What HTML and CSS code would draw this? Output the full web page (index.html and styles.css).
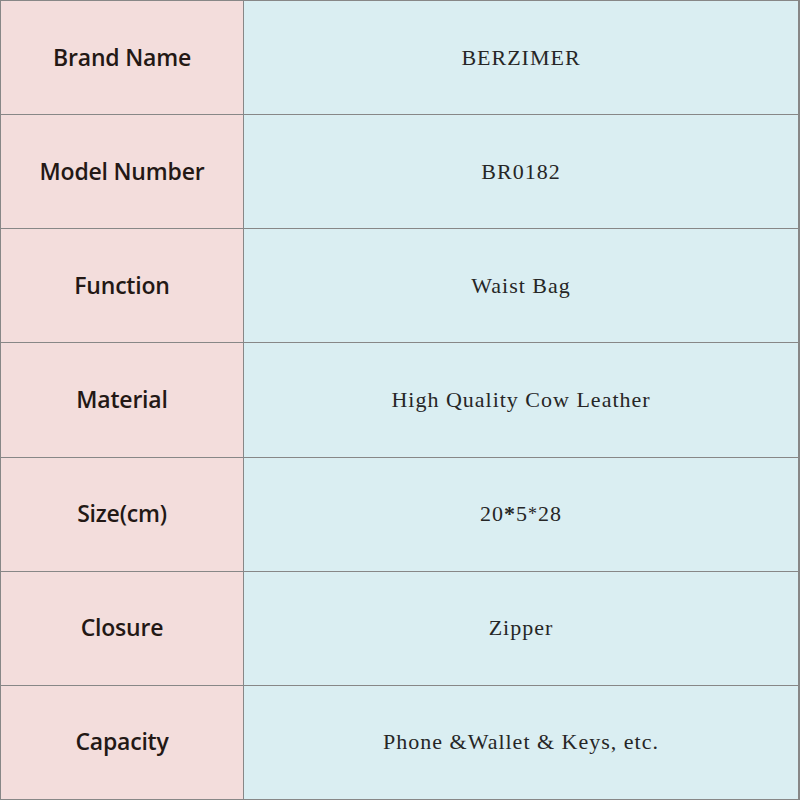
FILE: index.html
```html
<!DOCTYPE html>
<html lang="en">
<head>
<meta charset="utf-8">
<title>Product Specifications</title>
<link rel="stylesheet" href="styles.css">
</head>
<body>
<div class="spec-table">
  <div class="cell label">Brand Name</div>
  <div class="cell value">BERZIMER</div>
  <div class="cell label">Model Number</div>
  <div class="cell value">BR0182</div>
  <div class="cell label">Function</div>
  <div class="cell value">Waist Bag</div>
  <div class="cell label">Material</div>
  <div class="cell value">High Quality Cow Leather</div>
  <div class="cell label">Size(cm)</div>
  <div class="cell value">20<span class="star">*</span>5<span class="star-small">*</span>28</div>
  <div class="cell label">Closure</div>
  <div class="cell value">Zipper</div>
  <div class="cell label">Capacity</div>
  <div class="cell value">Phone &amp;Wallet &amp; Keys, etc.</div>
</div>
</body>
</html>
```
FILE: styles.css
```css
html, body {
  margin: 0;
  padding: 0;
  background: #ffffff;
}

.spec-table {
  box-sizing: border-box;
  width: 800px;
  height: 800px;
  padding: 1px 2px 1px 1px;
  background: #878787;
  display: grid;
  grid-template-columns: 242px 1fr;
  grid-template-rows: repeat(7, 1fr);
  gap: 1px;
}

.cell {
  display: flex;
  align-items: center;
  justify-content: center;
}

.label {
  background: #f3dddc;
  color: #231815;
  font-family: "Open Sans", "Liberation Sans", sans-serif;
  font-weight: 600;
  font-size: 23px;
  letter-spacing: -0.2px;
  padding-bottom: 2px;
}

.value {
  background: #daeef2;
  color: #262626;
  font-family: "Liberation Serif", serif;
  font-size: 22px;
  letter-spacing: 1px;
}

.star {
  font-weight: 700;
}

.star-small {
  font-size: 18px;
}
```
